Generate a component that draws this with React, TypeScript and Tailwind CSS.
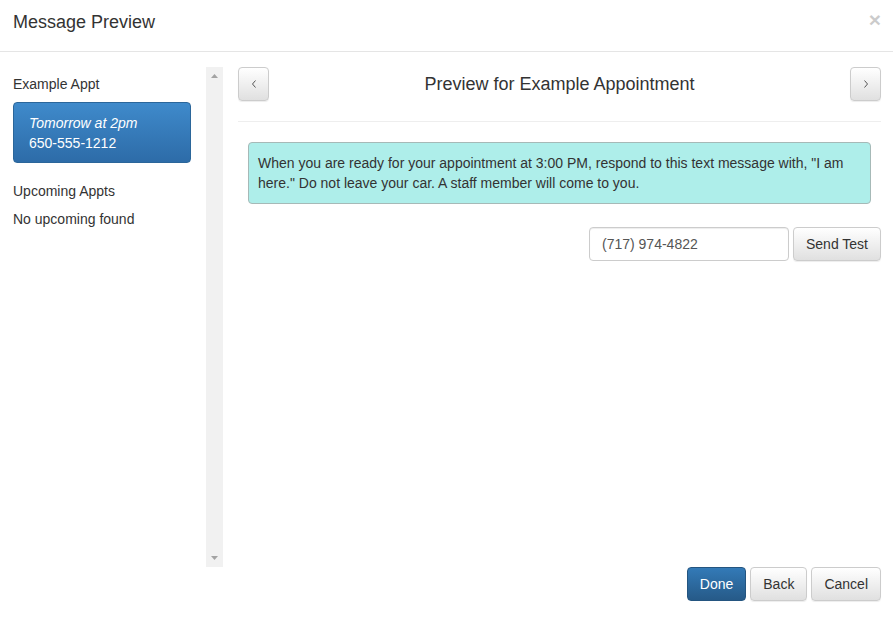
import React from "react";

const btn =
  "h-[34px] px-[12px] rounded-[4px] border border-[#ccc] bg-gradient-to-b from-white to-[#e0e0e0] text-[14px] text-[#333] shadow-[inset_0_1px_0_rgba(255,255,255,0.15),0_1px_1px_rgba(0,0,0,0.075)]";

function Chevron({ dir }: { dir: "left" | "right" }) {
  return (
    <svg width="6" height="10" viewBox="0 0 6 10" className="mx-auto">
      <path
        d={dir === "left" ? "M4.5 1.5 L1.5 5 L4.5 8.5" : "M1.5 1.5 L4.5 5 L1.5 8.5"}
        fill="none"
        stroke="#555"
        strokeWidth="1"
      />
    </svg>
  );
}

export default function App() {
  return (
    <div
      className="w-[893px] h-[627px] bg-white text-[#333] text-[14px] leading-[20px] overflow-hidden"
      style={{ fontFamily: '"Liberation Sans", Arial, sans-serif' }}
    >
      {/* header */}
      <div className="h-[52px] border-b border-[#e5e5e5] pl-[13px] pr-[12px] flex items-start justify-between pt-[11px]">
        <h4 className="text-[18px] leading-[22px] text-[#333]">Message Preview</h4>
        <button className="text-[21px] leading-[18px] font-bold text-[#000] opacity-20">×</button>
      </div>

      {/* body */}
      <div className="flex pt-[15px]">
        <div className="w-[206px] pl-[13px] pr-[15px] pt-[7px]">
          <div>Example Appt</div>
          <div className="mt-[8px] rounded-[4px] border border-[#2b669a] bg-gradient-to-b from-[#3f8acb] to-[#2d6ca8] text-white px-[15px] pt-[10px] pb-[9px]">
            <div className="italic">Tomorrow at 2pm</div>
            <div>650-555-1212</div>
          </div>
          <div className="mt-[18px]">Upcoming Appts</div>
          <div className="mt-[8px]">No upcoming found</div>
        </div>

        <div className="w-[17px] h-[500px] bg-[#f1f1f1] flex flex-col items-center justify-between py-[7px]">
          <svg width="7" height="4" viewBox="0 0 7 4">
            <path d="M0 4 L3.5 0 L7 4 Z" fill="#a3a3a3" />
          </svg>
          <svg width="7" height="4" viewBox="0 0 7 4">
            <path d="M0 0 L3.5 4 L7 0 Z" fill="#a3a3a3" />
          </svg>
        </div>

        <div className="ml-[15px] w-[643px]">
          <div className="flex items-center justify-between">
            <button className={`${btn} w-[31px] px-0`}>
              <Chevron dir="left" />
            </button>
            <h4 className="text-[18px] leading-[22px] text-[#333]">Preview for Example Appointment</h4>
            <button className={`${btn} w-[31px] px-0`}>
              <Chevron dir="right" />
            </button>
          </div>
          <div className="mt-[20px] border-t border-[#eee]" />

          <div className="mx-[10px] mt-[20px] rounded-[4px] border border-[#a6b9b7] bg-[#aeeeea] px-[9px] py-[10px] text-[#333]">
            When you are ready for your appointment at 3:00 PM, respond to this text message with, "I am here." Do not leave your car. A staff member will come to you.
          </div>

          <div className="mt-[23px] flex justify-end gap-[4px]">
            <input
              className="w-[200px] h-[34px] rounded-[4px] border border-[#ccc] px-[12px] text-[14px] text-[#555] shadow-[inset_0_1px_1px_rgba(0,0,0,0.075)] outline-none"
              defaultValue="(717) 974-4822"
            />
            <button className={`${btn} w-[88px]`}>Send Test</button>
          </div>
        </div>
      </div>

      {/* footer */}
      <div className="flex justify-end gap-[4px] pr-[12px]">
        <button className="h-[34px] px-[12px] rounded-[4px] border border-[#245580] bg-gradient-to-b from-[#337ab7] to-[#265a88] text-[14px] text-white">
          Done
        </button>
        <button className={btn}>Back</button>
        <button className={btn}>Cancel</button>
      </div>
    </div>
  );
}
